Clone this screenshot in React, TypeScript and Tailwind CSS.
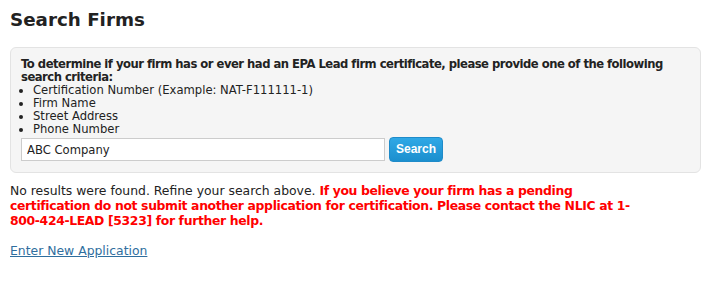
export default function App() {
  return (
    <div className="w-[716px] h-[286px] bg-white px-[10px] pt-[8px] font-['DejaVu_Sans',sans-serif] text-[#333333]">
      <div className="w-[691px]">
        <h1 className="text-[18.3px] font-bold leading-[24px] text-[#222222]">Search Firms</h1>

        <div className="mt-[15px] h-[126px] rounded-[6px] border border-[#e3e3e3] bg-[#f5f5f5] px-[10px] pt-[10px] pb-[10px] text-[11.6px] leading-[13px]">
          <p className="font-bold tracking-[-0.5px] text-[#222222]">
            To determine if your firm has or ever had an EPA Lead firm certificate, please provide one of the following search criteria:
          </p>
          <ul className="list-disc pl-[12px] text-[#222222]">
            <li>Certification Number (Example: NAT-F111111-1)</li>
            <li>Firm Name</li>
            <li>Street Address</li>
            <li>Phone Number</li>
          </ul>
          <div className="mt-[1px] flex items-center gap-[4px]">
            <input
              type="text"
              defaultValue="ABC Company"
              className="h-[23px] w-[364px] border border-[#cccccc] bg-white px-[5px] text-[11.6px] text-[#222222] outline-none"
            />
            <button className="h-[25px] rounded-[4px] border border-[#1f8bc9] bg-gradient-to-b from-[#2fa8e6] to-[#1b8fce] px-[6px] font-['Liberation_Sans',sans-serif] text-[12px] font-bold text-white">
              Search
            </button>
          </div>
        </div>

        <p className="mt-[10px] w-[628px] text-[12.4px] leading-[15px] text-[#222222]">
          No results were found. Refine your search above.{' '}
          <span className="font-bold tracking-[-0.35px] text-[#ff0000]">
            If you believe your firm has a pending certification do not submit another application for certification. Please contact the NLIC at 1-800-424-LEAD [5323] for further help.
          </span>
        </p>

        <a href="#" className="mt-[15px] inline-block text-[12.4px] leading-[15px] text-[#2f6e9e] underline">
          Enter New Application
        </a>
      </div>
    </div>
  );
}
